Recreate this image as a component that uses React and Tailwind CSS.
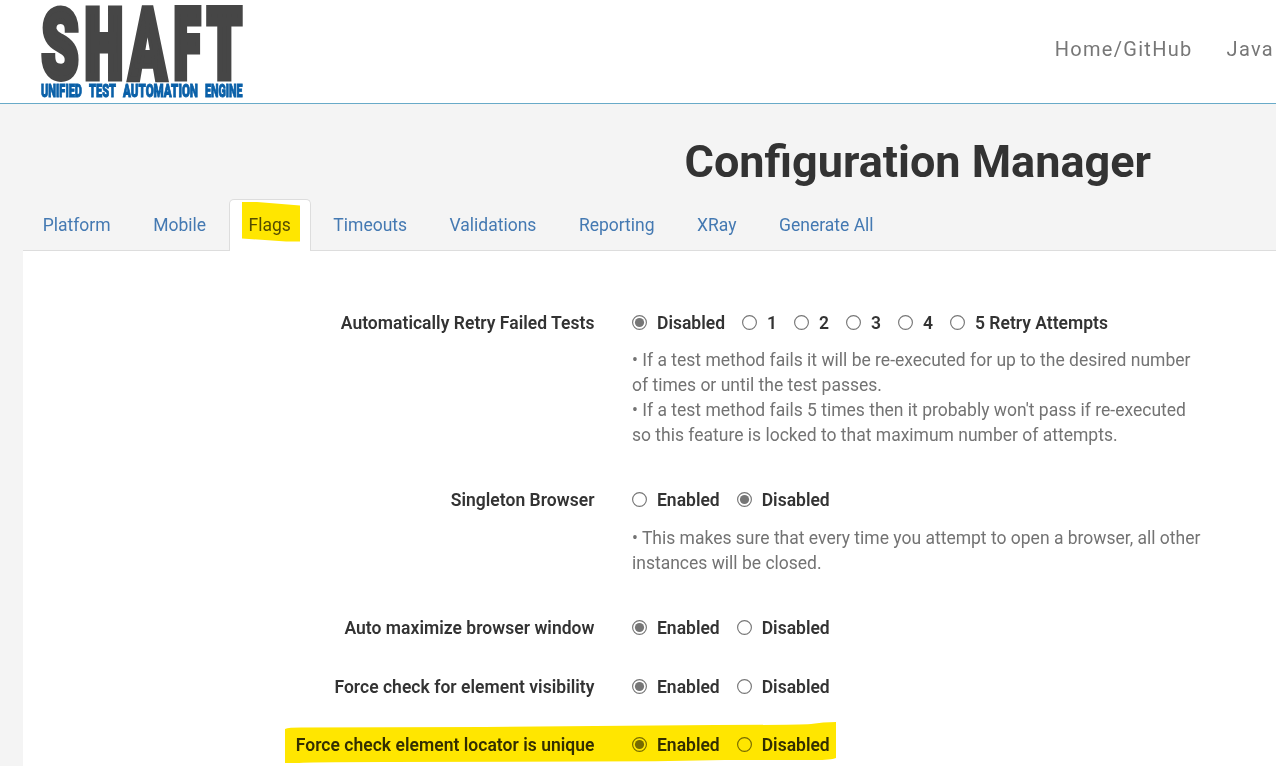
const TABS = ["Platform", "Mobile", "Flags", "Timeouts", "Validations", "Reporting", "XRay", "Generate All"];

const SETTINGS = [
  {
    label: "Automatically Retry Failed Tests",
    options: ["Disabled", "1", "2", "3", "4", "5 Retry Attempts"],
    selected: 0,
    help: [
      "• If a test method fails it will be re-executed for up to the desired number",
      "of times or until the test passes.",
      "• If a test method fails 5 times then it probably won't pass if re-executed",
      "so this feature is locked to that maximum number of attempts.",
    ],
    helpGap: "mt-[12px]",
    gap: "mb-[40px]",
  },
  {
    label: "Singleton Browser",
    options: ["Enabled", "Disabled"],
    selected: 1,
    help: [
      "• This makes sure that every time you attempt to open a browser, all other",
      "instances will be closed.",
    ],
    helpGap: "mt-[13px]",
    gap: "mb-[40px]",
  },
  { label: "Auto maximize browser window", options: ["Enabled", "Disabled"], selected: 0, gap: "mb-[34px]" },
  { label: "Force check for element visibility", options: ["Enabled", "Disabled"], selected: 0, gap: "mb-[33px]" },
  { label: "Force check element locator is unique", options: ["Enabled", "Disabled"], selected: 0, marked: true, gap: "" },
];

const TAGLINE = [
  { word: "UNIFIED", x: 1, width: 41 },
  { word: "TEST", x: 49, width: 27 },
  { word: "AUTOMATION", x: 83, width: 75 },
  { word: "ENGINE", x: 165, width: 37.5 },
];

const LETTERS = [
  { letter: "S", stroke: 6, transform: "translate(1.2 77.600) scale(.6 .96)" },
  { letter: "H", stroke: 9.5, transform: "translate(45.2 76.8) scale(.53 .94)" },
  { letter: "A", stroke: 5.5, transform: "translate(88.6 78.7) scale(.56 1)" },
  { letter: "F", stroke: 9.5, transform: "translate(134.2 76.8) scale(.47 .94)" },
  { letter: "T", stroke: 9.5, transform: "translate(167.7 76.8) scale(.53 .94)" },
];

function Logo() {
  return (
    <svg width="206" height="100" viewBox="0 0 206 100" className="block shrink-0 overflow-visible" fontFamily="Roboto, sans-serif" fontWeight="900">
      <g fill="#464646" stroke="#464646" fontSize="100">
        {LETTERS.map(({ letter, stroke, transform }) => (
          <text key={letter} strokeWidth={stroke} transform={transform}>{letter}</text>
        ))}
      </g>
      <g fill="#0a60a8" stroke="#0a60a8" strokeWidth=".9" fontSize="17.500">
        {TAGLINE.map(({ word, x, width }) => (
          <text key={word} x={x} y="97" textLength={width} lengthAdjust="spacingAndGlyphs">{word}</text>
        ))}
      </g>
    </svg>
  );
}

function Radio({ checked }) {
  return (
    <svg width="15" height="15" viewBox="0 0 15 15" className="mb-[2px] block shrink-0">
      <circle cx="7.5" cy="7.5" r="6.9" fill="#fff" stroke="#767676" strokeWidth="1.15" />
      {checked && <circle cx="7.5" cy="7.5" r="4.6" fill="#767676" />}
    </svg>
  );
}

function Setting({ label, options, selected, help, helpGap, marked, gap }) {
  return (
    <div className={`relative flex gap-[37.5px] ${gap}`}>
      <div className="w-[571.5px] shrink-0 text-right font-semibold tracking-[0.03px]">{label}</div>
      <div>
        <div className="flex gap-[17px] font-semibold">
          {options.map((option, i) => (
            <label key={option} className="flex items-center gap-[10px] whitespace-nowrap">
              <Radio checked={i === selected} />
              {option}
            </label>
          ))}
        </div>
        {help && (
          <div className={`${helpGap} text-[#737373]`}>
            {help.map((line) => (
              <p key={line} className="whitespace-nowrap">{line}</p>
            ))}
          </div>
        )}
      </div>
      {marked && (
        <svg width="552" height="42" viewBox="0 0 552 42" className="pointer-events-none absolute -top-[11px] left-[262px] mix-blend-multiply">
          <path d="M0 7Q4 5.500 18 5.600L200 5L310 4L430 3Q510 3 526 2Q538 0 551 0V36Q546 38 530 38H440Q370 39.500 300 39.500L100 40Q20 40 13 41H0Z" fill="#ffe600" />
        </svg>
      )}
    </div>
  );
}

export default function App() {
  return (
    <div className="flex h-[766px] w-full flex-col overflow-hidden bg-[#f4f4f4] font-[Roboto,sans-serif] text-[17.5px] leading-[25px] text-[#333]">
      <header className="shrink-0 bg-white">
        <div className="flex h-[103px] justify-between pl-10">
          <Logo />
          <nav className="flex gap-[34px] pt-[37px] pr-[2px] text-[20px] tracking-[1.3px] text-[#777]">
            <a>Home/GitHub</a>
            <a>Java</a>
          </nav>
        </div>
        <div className="h-px bg-[#68aac8]" />
      </header>
      <h1 className="mt-[33px] ml-[684.5px] text-[45px] leading-[50px] font-bold whitespace-nowrap">Configuration Manager</h1>
      <ul className="relative mt-[12px] ml-[23px] flex h-[52px] shrink-0 gap-[3px] border-b border-[#ddd]">
        {TABS.map((tab) => (
          <li
            key={tab}
            className={
              tab === "Flags"
                ? "relative h-[52px] rounded-t-[5px] border border-b-0 border-[#ddd] bg-white px-[18.75px] pt-[12.5px] text-[#555]"
                : "border border-b-0 border-transparent px-[18.75px] pt-[12.5px] text-[#4479b2]"
            }
          >
            {tab}
            {tab === "Flags" && (
              <svg width="58" height="40" viewBox="0 0 58 40" className="pointer-events-none absolute top-[2px] left-[12px] mix-blend-multiply">
                <path d="M0 0H15L58 3.500V39.500H44L0 36.500Z" fill="#ffe600" />
              </svg>
            )}
          </li>
        ))}
      </ul>
      <main className="ml-[23px] flex-1 bg-white pt-[60px]">
        {SETTINGS.map((setting) => (
          <Setting key={setting.label} {...setting} />
        ))}
      </main>
    </div>
  );
}
